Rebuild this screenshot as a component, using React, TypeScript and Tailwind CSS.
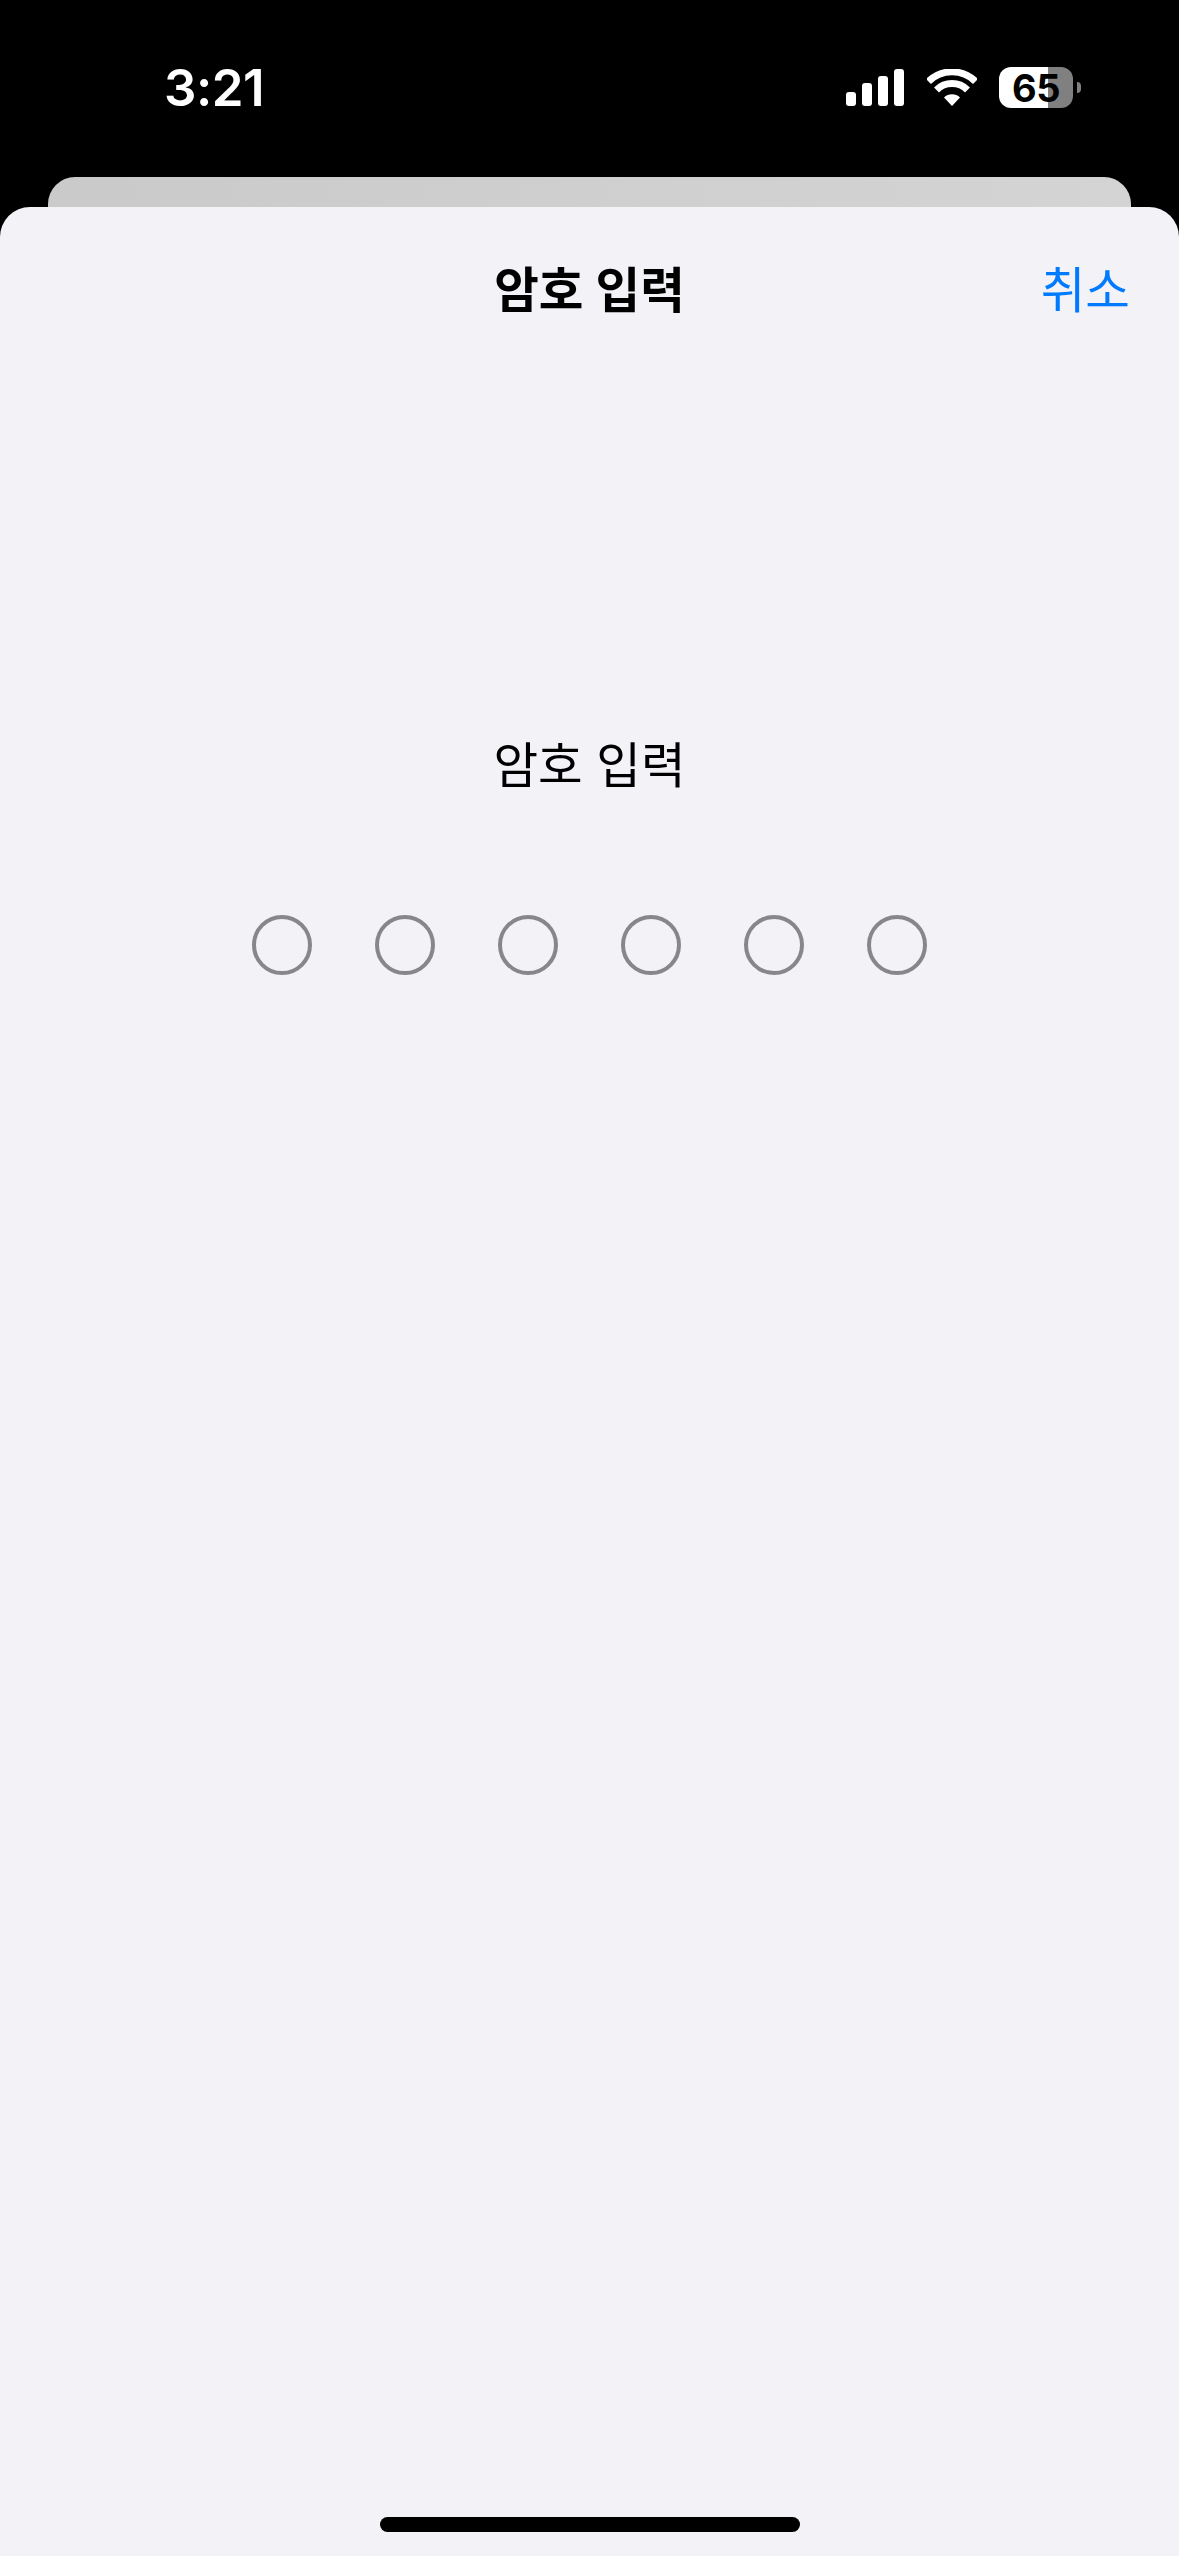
const koreanFont = "font-['Inter','Noto_Sans_CJK_KR',sans-serif]";

const dots = [0, 1, 2, 3, 4, 5];
const signalBars = ["h-[14px]", "h-[23px]", "h-[30px]", "h-[37px]"];

function StatusBar() {
  return (
    <div className="flex h-[177px] shrink-0 items-start justify-between pl-[164px] pr-[98px] pt-[67px] text-white">
      <span className="font-['Inter',sans-serif] text-[51px] leading-[41px] font-semibold tracking-[-0.5px]">3:21</span>
      <div className="flex items-center">
        <div className="flex items-end gap-[6px]">
          {signalBars.map((h) => (
            <div key={h} className={`w-[10px] rounded-[3px] bg-white ${h}`} />
          ))}
        </div>
        <svg width="50" height="37" viewBox="0 0 50 37" className="ml-[23px]" fill="none">
          <path d="M1.5 12.5 A33.5 33.5 0 0 1 48.5 12.5" stroke="#fff" strokeWidth="7" />
          <path d="M9.5 21 A22 22 0 0 1 40.5 21" stroke="#fff" strokeWidth="7" />
          <path d="M25 37 L17 28.5 A11.5 11.5 0 0 1 33 28.5 Z" fill="#fff" />
        </svg>
        <div className="ml-[22px] flex h-[41px] w-[74px] items-center justify-center rounded-[12px] bg-[linear-gradient(to_right,#fff_66%,#808080_66%)]">
          <span className="font-['Inter',sans-serif] text-[38px] leading-none font-bold tracking-[-0.5px] text-black">65</span>
        </div>
        <div className="ml-[4px] h-[11px] w-[4px] rounded-r-full bg-[#808080]" />
      </div>
    </div>
  );
}

function NavBar() {
  return (
    <div className="grid h-[168px] grid-cols-[1fr_auto_1fr] items-center px-[49px]">
      <div />
      <h1 className={`${koreanFont} text-[48.5px] leading-none font-semibold text-black`}>암호 입력</h1>
      <button className={`${koreanFont} justify-self-end text-[48.5px] leading-none font-normal text-[#007aff]`}>취소</button>
    </div>
  );
}

export default function App() {
  return (
    <div className="flex h-[2556px] w-[1179px] flex-col overflow-hidden bg-black">
      <StatusBar />
      <div className="mx-[48px] h-[30px] shrink-0 rounded-t-[27px] bg-[linear-gradient(to_right,#cacaca,#d4d4d4)]" />
      <main className="flex flex-1 flex-col rounded-t-[30px] bg-[#f2f2f7]">
        <NavBar />
        <div className="flex flex-col items-center pt-[360px]">
          <p className={`${koreanFont} text-[48.5px] leading-[62px] font-normal text-black`}>암호 입력</p>
          <div className="mt-[118px] flex gap-[63px]">
            {dots.map((d) => (
              <div key={d} className="h-[60px] w-[60px] rounded-full border-[4.5px] border-[#87878b]" />
            ))}
          </div>
        </div>
        <div className="mt-auto mb-[24px] h-[15px] w-[420px] self-center rounded-full bg-black" />
      </main>
    </div>
  );
}
